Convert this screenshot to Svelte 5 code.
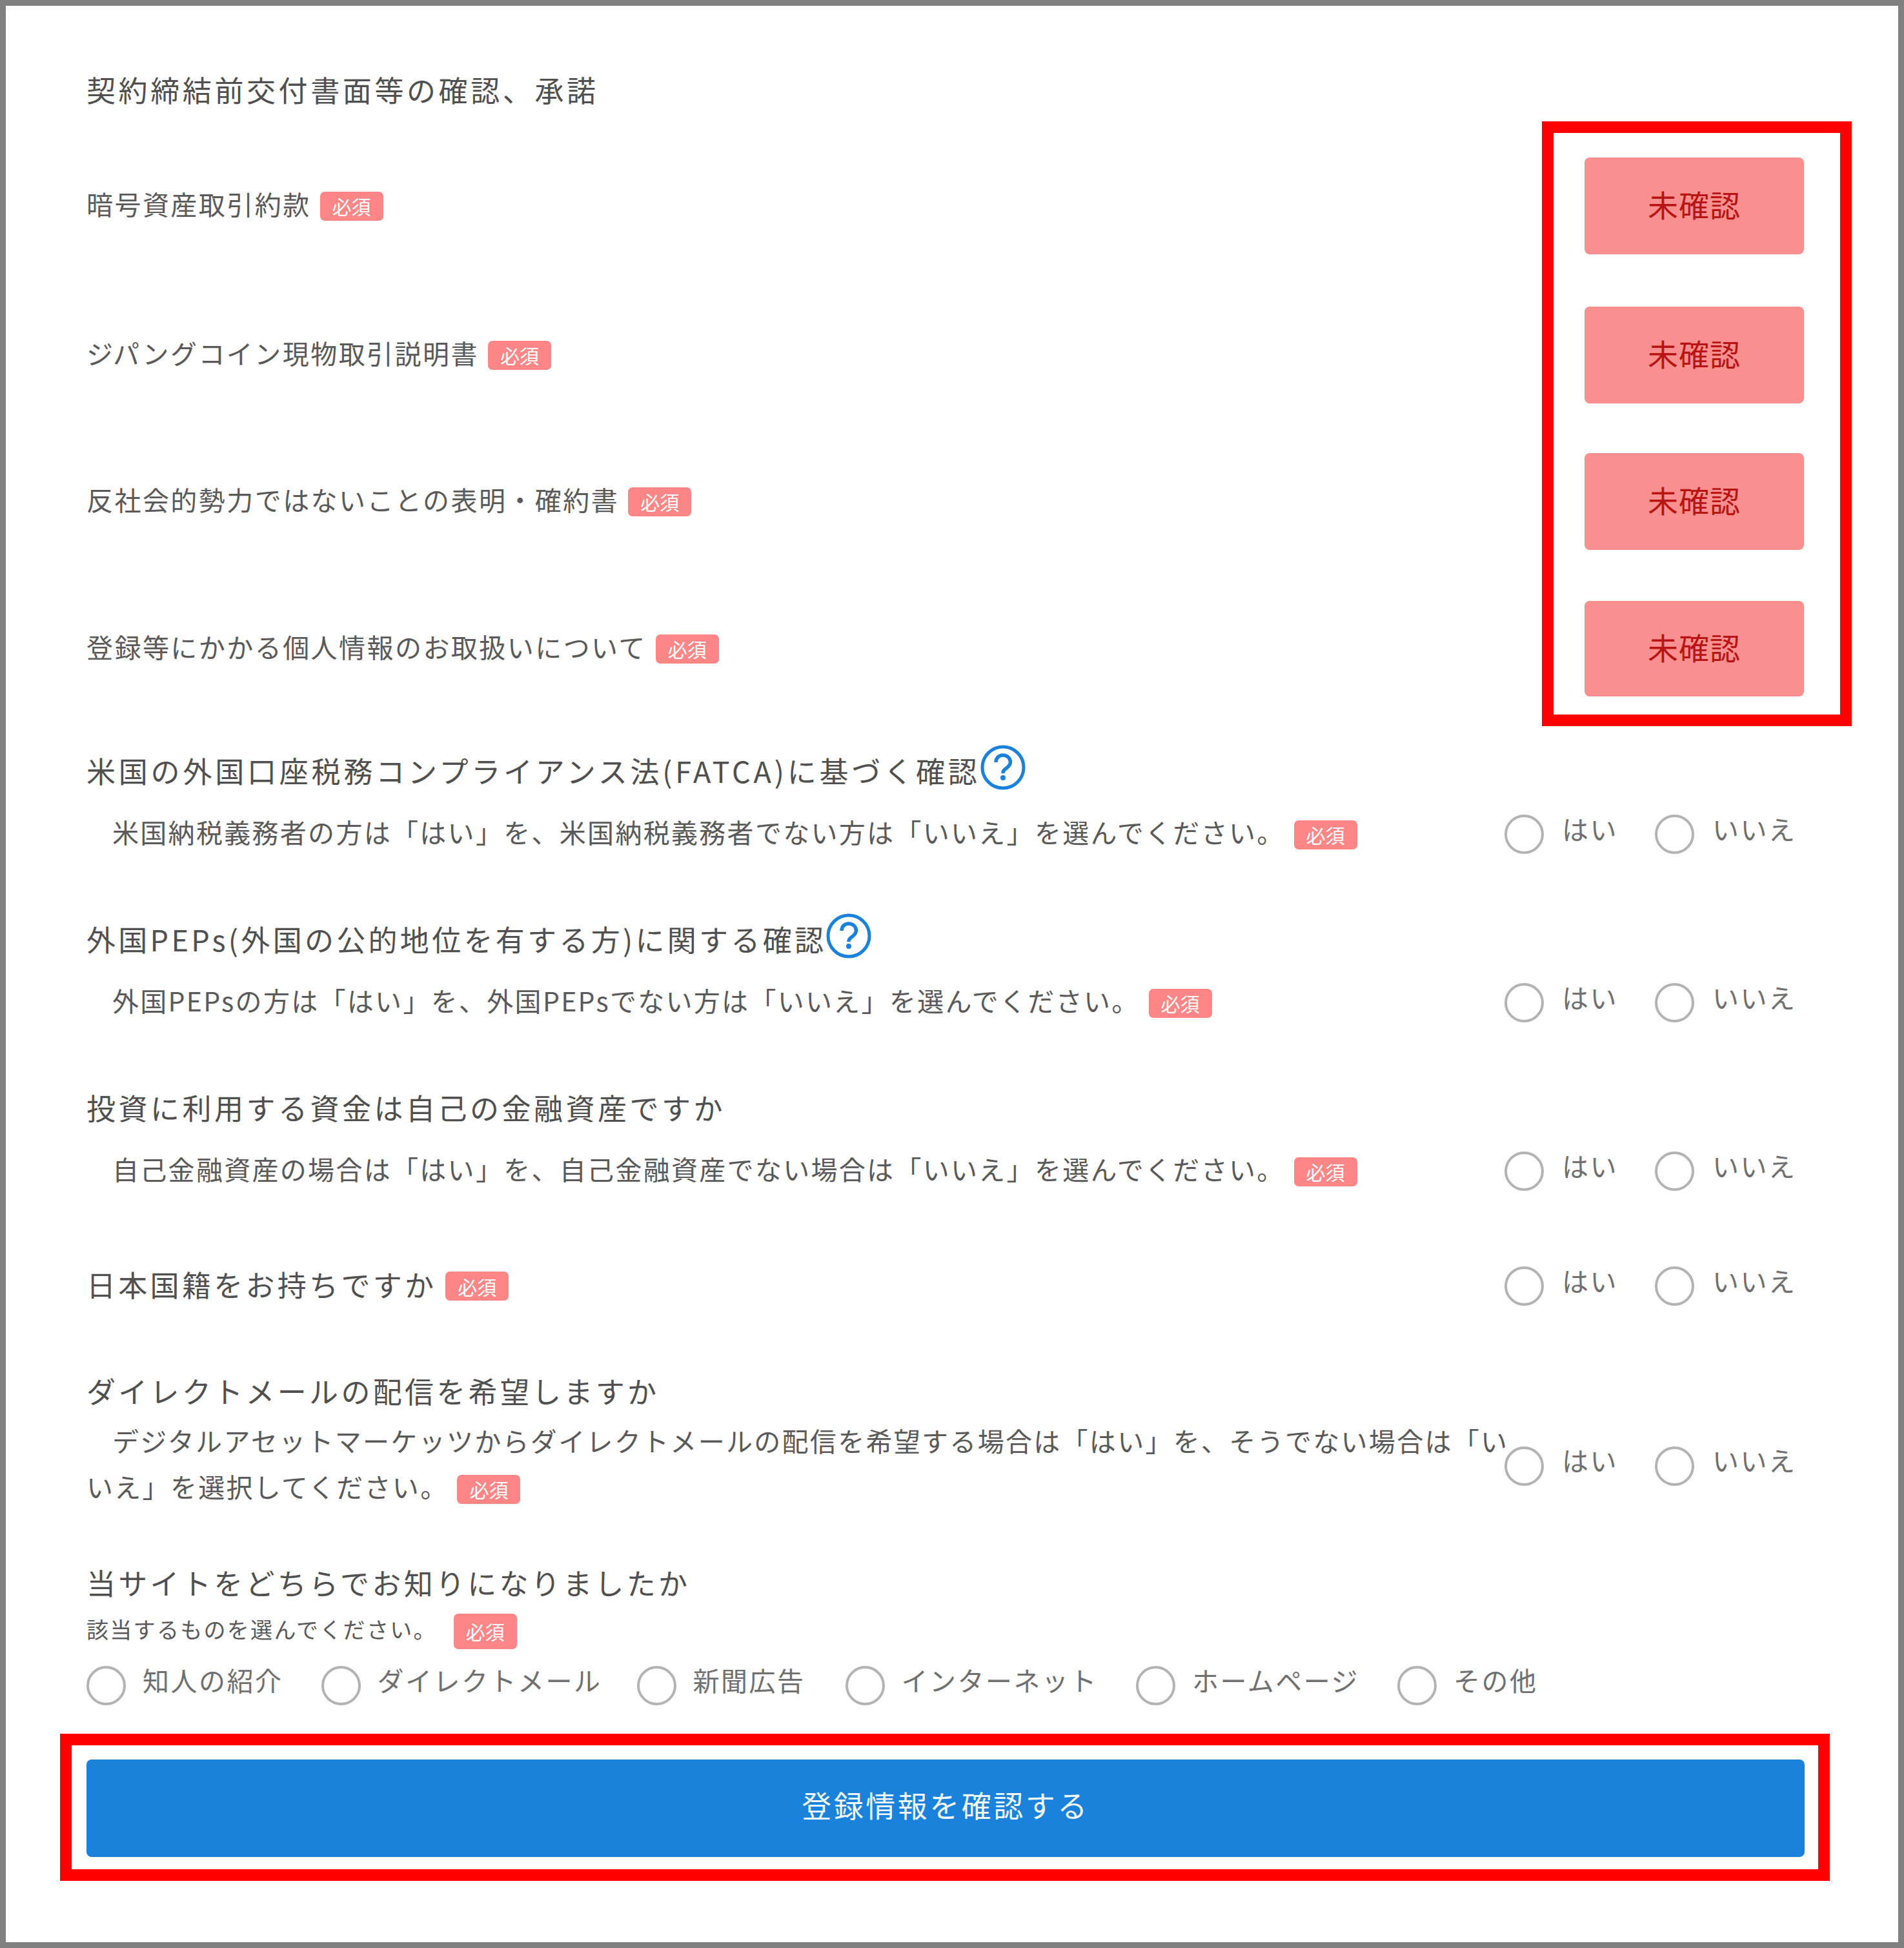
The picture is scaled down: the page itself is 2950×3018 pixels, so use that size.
<script>
  const docs = [
    "暗号資産取引約款",
    "ジパングコイン現物取引説明書",
    "反社会的勢力ではないことの表明・確約書",
    "登録等にかかる個人情報のお取扱いについて"
  ];
  const sources = ["知人の紹介", "ダイレクトメール", "新聞広告", "インターネット", "ホームページ", "その他"];
  let answers = $state({});
  let source = $state("");
</script>

{#snippet badge()}
  <span class="badge">必須</span>
{/snippet}

{#snippet help()}
  <svg class="help" viewBox="0 0 70 70" aria-hidden="true">
    <circle cx="35" cy="35" r="32" fill="none" stroke="#1a82da" stroke-width="5" />
    <path d="M24 27c0-7 5-11 11-11s11.500 4.500 11.500 10.500c0 5-3 7-6 9.500-3.500 2.500-5.500 4-5.500 8" fill="none" stroke="#1a82da" stroke-width="5.500" />
    <circle cx="35" cy="51" r="4" fill="#1a82da" />
  </svg>
{/snippet}

{#snippet yesno(name)}
  <div class="yesno">
    <label class="radio">
      <input type="radio" {name} value="yes" bind:group={answers[name]} />
      <span>はい</span>
    </label>
    <label class="radio">
      <input type="radio" {name} value="no" bind:group={answers[name]} />
      <span>いいえ</span>
    </label>
  </div>
{/snippet}

<div class="page">
  <div class="form">
    <h2 class="title first">契約締結前交付書面等の確認、承諾</h2>

    <div class="docs">
      {#each docs as doc}
        <div class="doc">
          <p class="doc-label"><span class="doc-text">{doc}</span>{@render badge()}</p>
          <button class="unconfirmed">未確認</button>
        </div>
      {/each}
    </div>

    <section class="q q1">
      <h3 class="title"><span>米国の外国口座税務コンプライアンス法(FATCA)に基づく確認</span>{@render help()}</h3>
      <div class="q-row">
        <p class="sub">米国納税義務者の方は「はい」を、米国納税義務者でない方は「いいえ」を選んでください。{@render badge()}</p>
        {@render yesno("fatca")}
      </div>
    </section>

    <section class="q q2">
      <h3 class="title"><span>外国PEPs(外国の公的地位を有する方)に関する確認</span>{@render help()}</h3>
      <div class="q-row">
        <p class="sub">外国PEPsの方は「はい」を、外国PEPsでない方は「いいえ」を選んでください。{@render badge()}</p>
        {@render yesno("peps")}
      </div>
    </section>

    <section class="q q3">
      <h3 class="title">投資に利用する資金は自己の金融資産ですか</h3>
      <div class="q-row">
        <p class="sub">自己金融資産の場合は「はい」を、自己金融資産でない場合は「いいえ」を選んでください。{@render badge()}</p>
        {@render yesno("funds")}
      </div>
    </section>

    <section class="q q4">
      <div class="q-row">
        <p class="title inline"><span class="inline-text">日本国籍をお持ちですか</span>{@render badge()}</p>
        {@render yesno("nationality")}
      </div>
    </section>

    <section class="q q5">
      <h3 class="title">ダイレクトメールの配信を希望しますか</h3>
      <div class="q-row">
        <p class="sub">デジタルアセットマーケッツからダイレクトメールの配信を希望する場合は「はい」を、そうでない場合は「いいえ」を選択してください。{@render badge()}</p>
        {@render yesno("mail")}
      </div>
    </section>

    <section class="q q6">
      <h3 class="title">当サイトをどちらでお知りになりましたか</h3>
      <p class="small">該当するものを選んでください。<span class="badge tall">必須</span></p>
      <div class="sources">
        {#each sources as s}
          <label class="radio">
            <input type="radio" name="source" value={s} bind:group={source} />
            <span>{s}</span>
          </label>
        {/each}
      </div>
    </section>

    <button class="submit">登録情報を確認する</button>
  </div>

  <div class="mark mark-docs"></div>
  <div class="mark mark-submit"></div>
</div>

<style>
  :global(body) {
    margin: 0;
    background: #fff;
  }
  .page {
    position: relative;
    box-sizing: border-box;
    width: 2950px;
    height: 3018px;
    border: 9px solid #808080;
    background: #fff;
    font-family: "Noto Sans CJK JP", "Noto Sans", sans-serif;
    color: #505050;
  }
  .form {
    display: flex;
    flex-direction: column;
    padding: 100px 145px 0 125px;
  }
  p, h2, h3 {
    margin: 0;
    font-weight: 400;
  }
  .title {
    font-size: 45px;
    letter-spacing: 4.3px;
    line-height: 60px;
    height: 60px;
    display: flex;
    align-items: center;
    white-space: nowrap;
  }
  .title.first { letter-spacing: 4.6px; }
  .q1 .title { letter-spacing: 4.8px; }
  .q3 .title { letter-spacing: 4.5px; }
  .docs {
    margin-top: 75px;
    display: flex;
    flex-direction: column;
  }
  .doc {
    display: flex;
    align-items: center;
    justify-content: space-between;
    height: 150px;
    margin-bottom: 79px;
  }
  .doc:nth-child(1) {
    margin-bottom: 81px;
  }
  .doc:nth-child(2) {
    margin-bottom: 77px;
  }
  .doc:last-child {
    height: 148px;
    margin-bottom: 0;
  }
  .doc-label, .sub {
    font-size: 41px;
    letter-spacing: 2.3px;
    line-height: 71px;
    color: #5a5a5a;
  }
  .doc-label {
    display: flex;
    align-items: center;
    letter-spacing: 2.45px;
  }
  .doc-text {
    margin-top: -8px;
  }
  .unconfirmed {
    width: 340px;
    height: 100%;
    margin-right: 1px;
    padding: 0 0 8px;
    border: none;
    border-radius: 8px;
    background: #f98f8f;
    color: #b81414;
    font: inherit;
    font-size: 47px;
    letter-spacing: 1px;
    cursor: pointer;
  }
  .badge {
    display: inline-flex;
    align-items: center;
    justify-content: center;
    box-sizing: border-box;
    width: 98px;
    height: 45px;
    margin-left: 14px;
    border-radius: 7px;
    background: #ff8686;
    color: #fff;
    font-size: 30px;
    letter-spacing: 0;
    line-height: 1;
    vertical-align: 0;
    text-indent: 0;
  }
  .badge.tall {
    height: 55px;
    margin-left: 26px;
    vertical-align: -2px;
  }
  .help {
    width: 70px;
    height: 70px;
    flex: none;
    margin: -10px 0 0 0;
  }
  .q {
    display: flex;
    flex-direction: column;
  }
  .q1 { margin-top: 85px; }
  .q2 { margin-top: 97px; }
  .q3 { margin-top: 97px; }
  .q4 { margin-top: 107px; }
  .q5 { margin-top: 97px; }
  .q6 { margin-top: 80px; }
  .q-row {
    display: flex;
    align-items: center;
    margin-top: 33px;
  }
  .q4 .q-row {
    margin-top: 0;
    height: 71px;
  }
  .q5 .q-row {
    margin-top: 15px;
  }
  .sub {
    width: 2205px;
    flex: none;
    margin-top: -4px;
    margin-bottom: 4px;
    text-indent: 40px;
  }
  .title.inline {
    width: 2205px;
    flex: none;
  }
  .inline-text {
    margin-top: -6px;
  }
  .yesno {
    display: flex;
    gap: 57px;
    width: 464px;
    flex: none;
    margin-left: -8px;
  }
  .radio {
    display: flex;
    align-items: center;
    gap: 28px;
    font-size: 41px;
    letter-spacing: 2.5px;
    color: #707070;
    white-space: nowrap;
    cursor: pointer;
  }
  .radio span {
    margin-top: -20px;
  }
  input[type="radio"] {
    appearance: none;
    box-sizing: border-box;
    width: 61px;
    height: 61px;
    margin: 0;
    border: 4px solid #b3b3b3;
    border-radius: 50%;
    background: #fff;
    flex: none;
  }
  input[type="radio"]:checked {
    background: radial-gradient(#1a82da 40%, #fff 44%);
  }
  .small {
    margin-top: 14px;
    font-size: 34px;
    letter-spacing: 2.3px;
    line-height: 55px;
    height: 55px;
    color: #5a5a5a;
  }
  .sources {
    display: flex;
    gap: 59px;
    margin-top: 30px;
  }
  .sources .radio {
    gap: 26px;
  }
  .sources .radio:nth-child(2) {
    margin-right: -5px;
  }
  .sources .radio:nth-child(3) {
    margin-right: 3px;
  }
  .submit {
    width: 2662px;
    height: 151px;
    margin-top: 84px;
    padding: 0 0 14px;
    border: none;
    border-radius: 8px;
    background: #1a82da;
    color: #f0f7fd;
    font: inherit;
    font-size: 46px;
    letter-spacing: 3.5px;
    cursor: pointer;
  }
  .mark {
    position: absolute;
    box-sizing: border-box;
    border: 18px solid #ff0000;
    pointer-events: none;
  }
  .mark-docs {
    left: 2380px;
    top: 179px;
    width: 480px;
    height: 937px;
  }
  .mark-submit {
    left: 84px;
    top: 2677px;
    width: 2742px;
    height: 228px;
  }
</style>
